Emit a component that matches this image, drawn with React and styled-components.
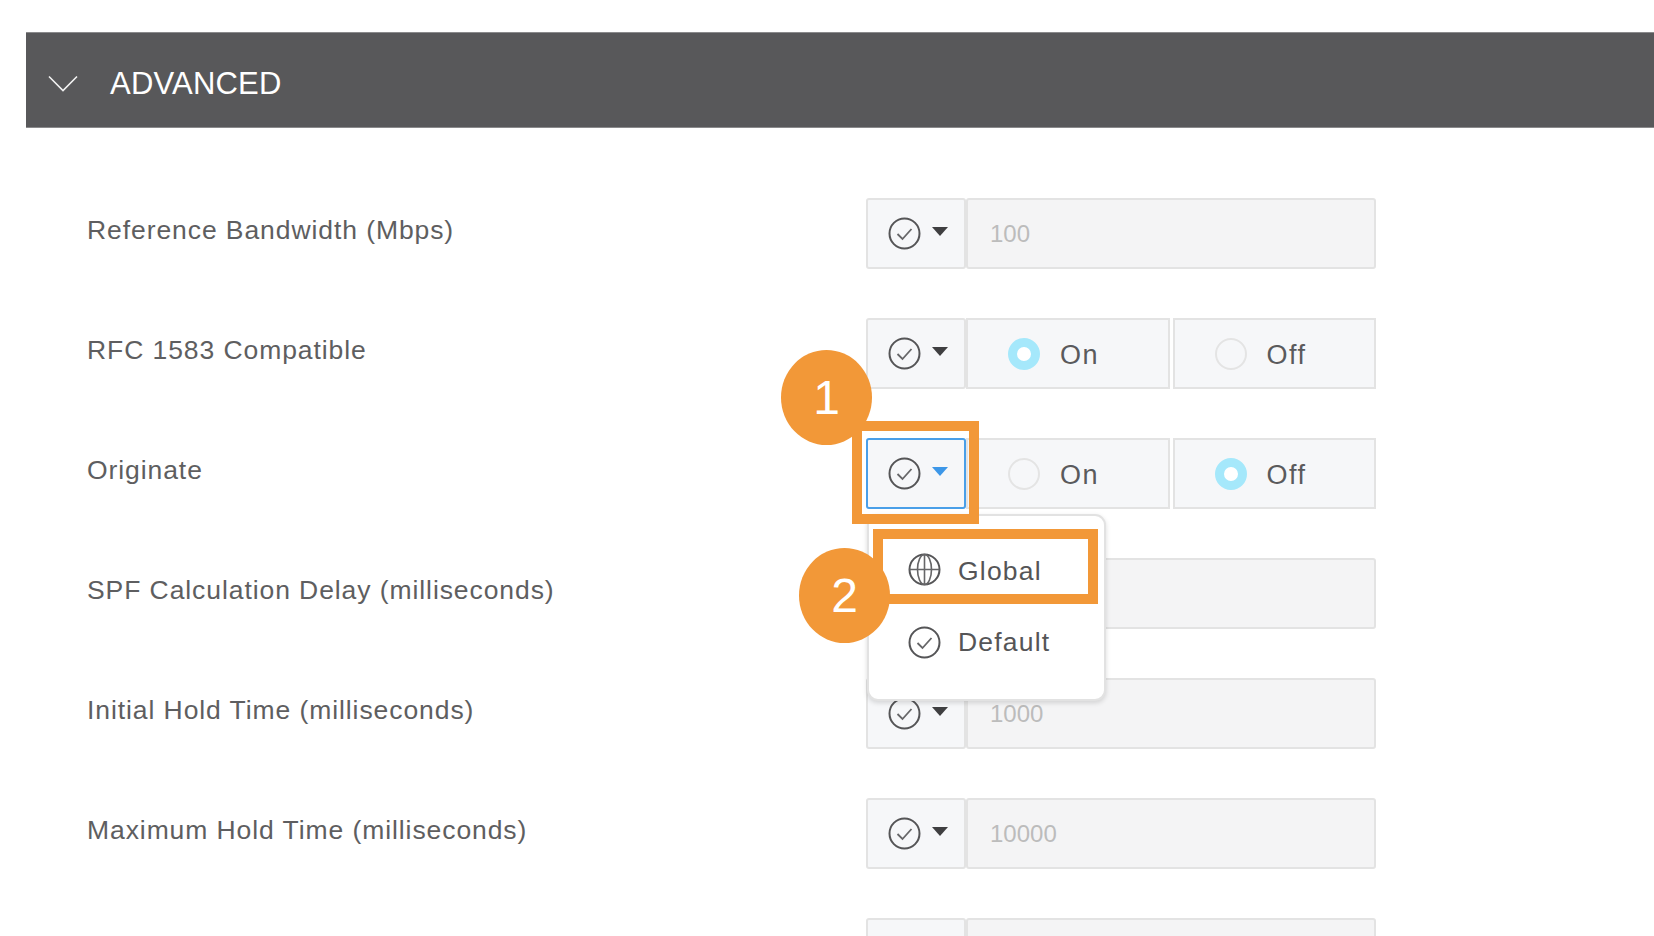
import React from "react";
import styled, { createGlobalStyle } from "styled-components";

const Global = createGlobalStyle`
  html, body { margin: 0; padding: 0; height: 100%; overflow: hidden; background: #fff; }
  body { font-family: "Liberation Sans", Arial, sans-serif; }
`;
const Page = styled.div`
  height: 936px; overflow: hidden; padding: 32px 0 0 26px; box-sizing: border-box;
`;
const Header = styled.div`
  height: 96px; box-sizing: border-box; background: #58585a; border-top: 1px solid #8a8a8c;
  border-bottom: 1px solid #8a8a8c; display: flex; align-items: center; padding: 0 0 0 22px; gap: 32px;
  margin-bottom: 70px;
`;
const HeaderTitle = styled.h2`
  margin: 0; font-size: 31px; font-weight: 400; color: #fff; line-height: 1; letter-spacing: 0.2px;
  position: relative; top: 3px;
`;
const Rows = styled.div`
  display: flex; flex-direction: column; gap: 49px; padding-left: 61px;
`;
const Row = styled.div`
  display: grid; grid-template-columns: 779px 510px; height: 71px;
`;
const Label = styled.div`
  font-size: 26.5px; letter-spacing: 0.92px; color: #5e5e60; line-height: 64px; white-space: nowrap;
`;
const Controls = styled.div`
  display: flex; position: relative;
`;
const Select = styled.div`
  width: 100px; height: 71px; box-sizing: border-box; border-radius: 3px;
  background: #f6f7f9; border: 2px solid ${p => (p.$active ? "#4a9fe8" : "#e3e3e3")};
  display: flex; align-items: center; padding-left: 20px; gap: 11px; flex: none;
`;
const Caret = styled.span`
  width: 0; height: 0; border-left: 8px solid transparent; border-right: 8px solid transparent;
  border-top: 9px solid ${p => (p.$active ? "#3d97e8" : "#3f3f41")};
  margin-top: -4px;
`;
const Input = styled.div`
  flex: 1; height: 71px; box-sizing: border-box; border: 2px solid #e3e3e3; border-radius: 3px;
  background: #f4f4f5; color: #bcbcbc; font-size: 24px; display: flex; align-items: center; padding-left: 22px;
`;
const RadioBox = styled.div`
  flex: 1; height: 71px; box-sizing: border-box; border: 2px solid #e3e3e3; background: #f6f7f9;
  display: flex; align-items: center; padding-left: 40px; gap: 20px;
  font-size: 27px; letter-spacing: 1.5px; color: #5a5a5c;
  & + & { margin-left: 3px; }
`;
const RadioText = styled.span`
  position: relative; top: 2px;
`;
const Radio = styled.span`
  width: 32px; height: 32px; box-sizing: border-box; border-radius: 50%; flex: none; background: ${p => (p.$on ? "#fff" : "#f6f7f9")};
  border: ${p => (p.$on ? "9px solid #a5e8fb" : "2px solid #e4e4e4")};
`;
const Menu = styled.div`
  position: absolute; left: 1px; top: 76px; width: 239px; height: 187px; box-sizing: border-box; z-index: 2;
  background: #fff; border: 2px solid #e2e2e2; border-radius: 11px; box-shadow: 0 2px 5px rgba(0,0,0,.14);
  padding-top: 20px;
`;
const MenuItem = styled.div`
  display: flex; align-items: center; height: 72px; padding-left: 39px; gap: 17px; margin-top: -1px;
  font-size: 26.5px; letter-spacing: 1.2px; color: #555557;
`;
const GlobeWrap = styled.span`
  display: flex; position: relative; top: -2px;
`;
const Frame = styled.div`
  position: absolute; box-sizing: border-box; border: 10px solid #f29838; z-index: 3; pointer-events: none;
  left: ${p => p.$x}px; top: ${p => p.$y}px; width: ${p => p.$w}px; height: ${p => p.$h}px;
`;
const Badge = styled.div`
  position: absolute; z-index: 4; width: 91px; height: 95px; border-radius: 50%; background: #f29838; color: #fff;
  font-size: 48px; display: flex; align-items: center; justify-content: center;
  left: ${p => p.$x}px; top: ${p => p.$y}px;
`;

const CheckIcon = () => (
  <svg width="33" height="33" viewBox="0 0 33 33" fill="none" style={{ flex: "none" }}>
    <circle cx="16.5" cy="16.5" r="15" stroke="#555557" strokeWidth="2" />
    <path d="M9.5 17l5 5 9-10" stroke="#666668" strokeWidth="1.8" />
  </svg>
);
const GlobeIcon = () => (
  <svg width="33" height="33" viewBox="0 0 33 33" fill="none" style={{ flex: "none" }}>
    <circle cx="16.5" cy="16.5" r="15" stroke="#555557" strokeWidth="2" />
    <ellipse cx="16.5" cy="16.5" rx="7" ry="15" stroke="#666668" strokeWidth="1.6" />
    <path d="M16.5 1.5v30M1.5 16.5h30" stroke="#666668" strokeWidth="1.6" />
  </svg>
);
const Chevron = () => (
  <svg width="30" height="18" viewBox="0 0 30 18" fill="none" style={{ flex: "none", position: "relative", top: 4 }}>
    <path d="M1 1.5l14 14 14-14" stroke="#f2f2f2" strokeWidth="1.6" />
  </svg>
);

const Sel = ({ active }) => (
  <Select $active={active}><CheckIcon /><Caret $active={active} /></Select>
);
const Radios = ({ on }) => (
  <>
    <RadioBox><Radio $on={on} /><RadioText>On</RadioText></RadioBox>
    <RadioBox><Radio $on={!on} /><RadioText>Off</RadioText></RadioBox>
  </>
);

export default function App() {
  return (
    <Page>
      <Global />
      <Header>
        <Chevron />
        <HeaderTitle>ADVANCED</HeaderTitle>
      </Header>
      <Rows>
        <Row>
          <Label>Reference Bandwidth (Mbps)</Label>
          <Controls><Sel /><Input>100</Input></Controls>
        </Row>
        <Row>
          <Label>RFC 1583 Compatible</Label>
          <Controls><Sel /><Radios on /></Controls>
        </Row>
        <Row>
          <Label>Originate</Label>
          <Controls>
            <Sel active />
            <Radios on={false} />
            <Badge $x={-85} $y={-88}>1</Badge>
            <Frame $x={-14} $y={-17} $w={127} $h={103} />
            <Menu>
              <MenuItem><GlobeWrap><GlobeIcon /></GlobeWrap>Global</MenuItem>
              <MenuItem><CheckIcon />Default</MenuItem>
            </Menu>
            <Frame $x={7} $y={91} $w={225} $h={75} />
            <Badge $x={-67} $y={110}>2</Badge>
          </Controls>
        </Row>
        <Row>
          <Label>SPF Calculation Delay (milliseconds)</Label>
          <Controls><Sel /><Input /></Controls>
        </Row>
        <Row>
          <Label>Initial Hold Time (milliseconds)</Label>
          <Controls><Sel /><Input>1000</Input></Controls>
        </Row>
        <Row>
          <Label>Maximum Hold Time (milliseconds)</Label>
          <Controls><Sel /><Input>10000</Input></Controls>
        </Row>
        <Row>
          <Label />
          <Controls><Sel /><Input /></Controls>
        </Row>
      </Rows>
    </Page>
  );
}
